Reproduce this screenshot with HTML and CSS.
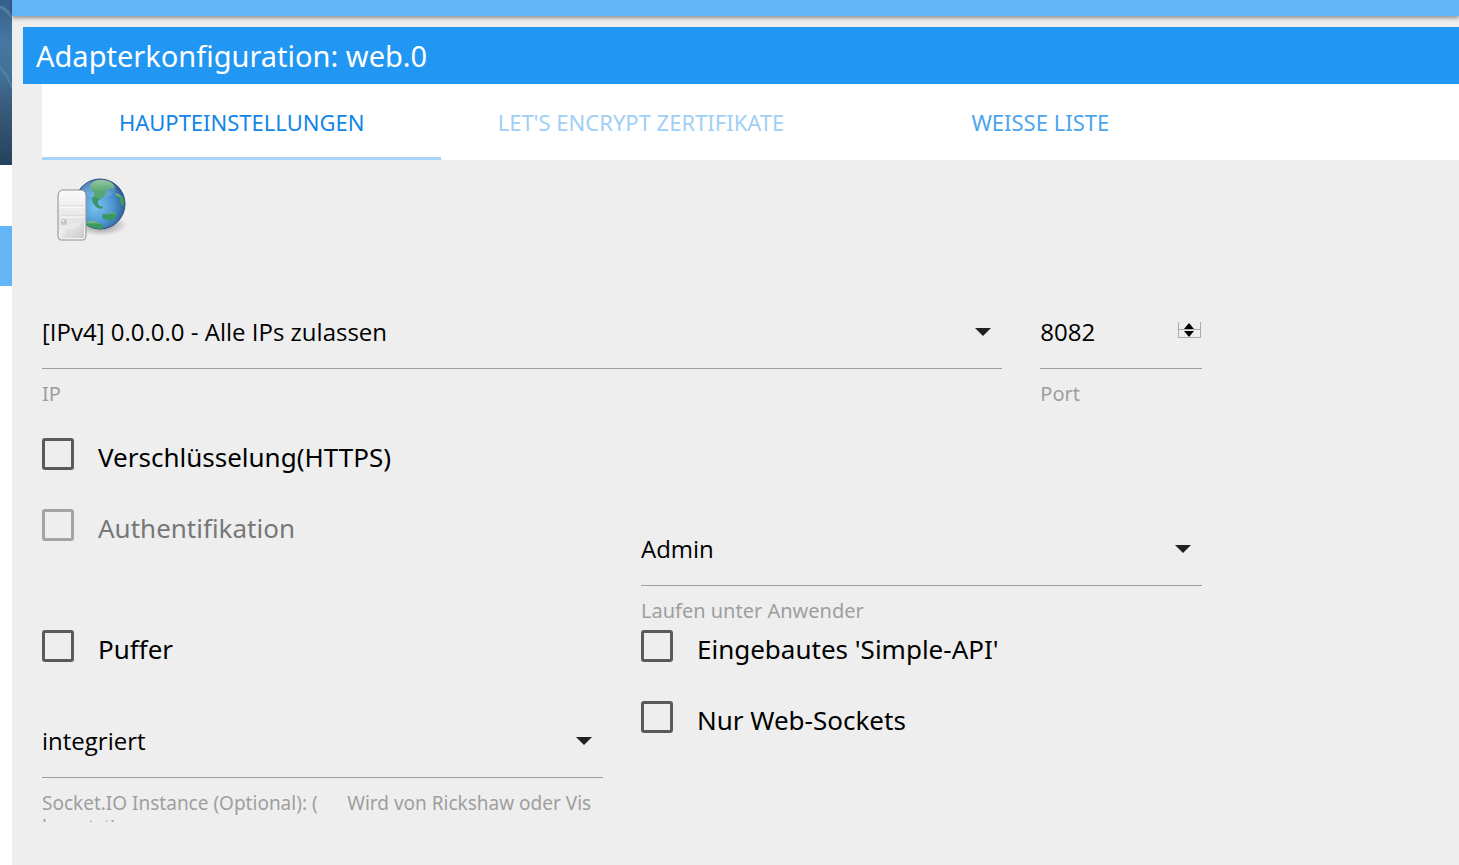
FILE: index.html
```html
<!DOCTYPE html>
<html lang="de">
<head>
<meta charset="UTF-8">
<meta name="viewport" content="width=device-width, initial-scale=1.0">
<title>Adapterkonfiguration: web.0</title>
<link rel="stylesheet" href="styles.css">
</head>
<body>

<aside class="sidebar">
    <div class="sidebar-image">
        <svg viewBox="0 0 12 165" preserveAspectRatio="none" aria-hidden="true">
            <path d="M0 7Q8 10 12 18" stroke="#6590b4" stroke-width="3" fill="none" opacity="0.6"/>
            <path d="M0 67Q7 74 12 88" stroke="#5d8cb0" stroke-width="2" fill="none" opacity="0.6"/>
        </svg>
    </div>
    <div class="sidebar-active"></div>
</aside>

<main class="page">
    <div class="topbar"></div>
    <h1 class="title">Adapterkonfiguration: web.0</h1>

    <div class="content">
        <nav class="tabs">
            <a href="#main" class="tab active">HAUPTEINSTELLUNGEN</a>
            <a href="#letsencrypt" class="tab disabled">LET'S ENCRYPT ZERTIFIKATE</a>
            <a href="#whitelist" class="tab">WEISSE LISTE</a>
        </nav>

        <form class="settings" id="main">
            <svg class="logo" viewBox="0 0 72 72" role="img" aria-label="web">
                <defs>
                    <radialGradient id="globe" cx="42%" cy="55%" r="60%">
                        <stop offset="0" stop-color="#7cc4f0"/>
                        <stop offset="0.6" stop-color="#4b93cf"/>
                        <stop offset="1" stop-color="#2c5a94"/>
                    </radialGradient>
                    <linearGradient id="land" x1="0" y1="0" x2="0" y2="1">
                        <stop offset="0" stop-color="#86bd92"/>
                        <stop offset="0.4" stop-color="#3a9a5f"/>
                        <stop offset="1" stop-color="#3b9667"/>
                    </linearGradient>
                    <linearGradient id="tower" x1="0" y1="0" x2="0" y2="1">
                        <stop offset="0" stop-color="#fafafa"/>
                        <stop offset="0.6" stop-color="#e4e4e4"/>
                        <stop offset="1" stop-color="#f4f4f4"/>
                    </linearGradient>
                    <linearGradient id="foot" x1="0" y1="0" x2="1" y2="1">
                        <stop offset="0" stop-color="#fff"/>
                        <stop offset="1" stop-color="#c9c9c9"/>
                    </linearGradient>
                    <radialGradient id="shadow">
                        <stop offset="0" stop-color="#000" stop-opacity="0.45"/>
                        <stop offset="1" stop-color="#000" stop-opacity="0"/>
                    </radialGradient>
                    <clipPath id="ball"><circle cx="44" cy="28" r="25"/></clipPath>
                </defs>
                <ellipse cx="45" cy="49" rx="26" ry="11" fill="url(#shadow)"/>
                <circle cx="44" cy="28" r="25" fill="url(#globe)" stroke="#2f4f80" stroke-width="1"/>
                <g clip-path="url(#ball)" fill="url(#land)">
                    <path d="M34 10Q36 5 42 4Q52 3 57 8Q60 11 57 13Q54 12 50 14Q51 18 48 21Q44 22 42 25Q41 28 44 30Q47 30 47 32Q44 34 40 31Q36 27 36 22Q39 20 38 16Q34 15 34 10Z"/>
                    <path d="M59 17Q65 18 68 23V30Q63 28 64 24Q63 20 60 20Z"/>
                    <path d="M47 38Q51 37 53 39L55 35L57 37L60 36Q61 41 58 44Q52 45 48 43Q45 41 47 38Z"/>
                    <path d="M30 46Q40 43 48 50L46 54Q35 55 28 48Z"/>
                </g>
                <ellipse cx="43" cy="13" rx="17" ry="9" fill="#fff" opacity="0.14"/>
                <path d="M6 14H26Q30 15 30 19V60Q30 64 27 64H5Q2 64 2 60V19Q3 14 6 14Z" fill="url(#tower)" stroke="#8f8f8f" stroke-width="1"/>
                <path d="M5 30H28M5 40H28" stroke="#cfcfcf"/>
                <path d="M5 31H28M5 41H28" stroke="#fff"/>
                <path d="M28 41Q25 52 14 53Q6 54 4 62H28Z" fill="url(#foot)"/>
                <circle cx="8" cy="46" r="3" fill="#c4c4c4"/>
                <circle cx="7" cy="45" r="1" fill="#f1f1f1"/>
                <path d="M12 53V61" stroke="#d4d4d4"/>
            </svg>

            <div class="row row-network">
                <div class="field field-ip">
                    <div class="control">
                        <select id="bind"><option>[IPv4] 0.0.0.0 - Alle IPs zulassen</option></select>
                        <svg class="caret" viewBox="0 0 16 8" aria-hidden="true"><path d="M0 0H16L8 8Z"/></svg>
                    </div>
                    <label for="bind">IP</label>
                </div>
                <div class="field">
                    <div class="control">
                        <input type="number" id="port" value="8082">
                        <div class="spinner">
                            <button type="button" aria-label="Port erhöhen" onclick="port.stepUp()"><svg viewBox="0 0 10 6"><path d="M0 6H10L5 0Z"/></svg></button>
                            <button type="button" aria-label="Port verringern" onclick="port.stepDown()"><svg viewBox="0 0 10 6"><path d="M0 0H10L5 6Z"/></svg></button>
                        </div>
                    </div>
                    <label for="port">Port</label>
                </div>
            </div>

            <div class="check">
                <input type="checkbox" id="secure">
                <label for="secure">Verschlüsselung(HTTPS)</label>
            </div>

            <div class="row">
                <div class="check">
                    <input type="checkbox" id="auth" disabled>
                    <label for="auth">Authentifikation</label>
                </div>
                <div class="field">
                    <div class="control">
                        <select id="defaultUser"><option>Admin</option></select>
                        <svg class="caret" viewBox="0 0 16 8" aria-hidden="true"><path d="M0 0H16L8 8Z"/></svg>
                    </div>
                    <label for="defaultUser">Laufen unter Anwender</label>
                </div>
            </div>

            <div class="row">
                <div class="column">
                    <div class="check">
                        <input type="checkbox" id="cache">
                        <label for="cache">Puffer</label>
                    </div>
                    <div class="field">
                        <div class="control">
                            <select id="socketio"><option>integriert</option></select>
                            <svg class="caret" viewBox="0 0 16 8" aria-hidden="true"><path d="M0 0H16L8 8Z"/></svg>
                        </div>
                        <label for="socketio" class="long">Socket.IO Instance (Optional): ( &nbsp; &nbsp; &nbsp;Wird von Rickshaw oder Vis benutzt)</label>
                    </div>
                </div>
                <div class="column">
                    <div class="check">
                        <input type="checkbox" id="simpleapi">
                        <label for="simpleapi">Eingebautes 'Simple-API'</label>
                    </div>
                    <div class="check">
                        <input type="checkbox" id="forceWebSockets">
                        <label for="forceWebSockets">Nur Web-Sockets</label>
                    </div>
                </div>
            </div>
        </form>
    </div>
</main>

</body>
</html>
```

FILE: styles.css
```css
* {
    box-sizing: border-box;
}
body {
    display: flex;
    min-height: 100vh;
    margin: 0;
    font-family: "Noto Sans", sans-serif;
    background-color: #fff;
    color: #000;
}

/* Sidebar */
.sidebar {
    flex: 0 0 12px;
}
.sidebar-image {
    height: 165px;
    margin-bottom: 61px;
    background: linear-gradient(#35608c, #4577a0 25%, #42729a 45%, #3d5f80 60%, #26425c);
}
.sidebar-image svg {
    display: block;
    width: 100%;
    height: 100%;
}
.sidebar-active {
    height: 60px;
    background-color: #64b5f6;
}

/* Page */
.page {
    flex: 1;
    min-width: 0;
    background-color: #eee;
}
.topbar {
    height: 16px;
    background-color: #64b5f6;
    box-shadow: 0 2px 4px rgba(0, 0, 0, 0.4);
}
.title {
    margin: 11px 0 0 11px;
    padding: 1px 13px 0;
    background-color: #2196f3;
    color: #fff;
    font-size: 29px;
    font-weight: 400;
    line-height: 56px;
}
.content {
    margin-left: 30px;
}

/* Tabs */
.tabs {
    display: grid;
    grid-template-columns: repeat(3, 1fr);
    padding-right: calc(18% - 36px);
    background-color: #fff;
}
.tab {
    height: 76px;
    border-bottom: 3px solid transparent;
    color: #4ba5ee;
    font-size: 22px;
    line-height: 76px;
    text-align: center;
    text-decoration: none;
    white-space: nowrap;
}
.tab.active {
    border-color: #a6d4fa;
    color: #1185e8;
}
.tab.disabled {
    color: #a0cff6;
}

/* Form */
.settings {
    width: calc(82% - 2px);
}
.logo {
    display: block;
    width: 72px;
    height: 72px;
    margin: 16px 0 24px 14px;
}
.row {
    display: grid;
    grid-template-columns: 1fr 1fr;
    column-gap: 38px;
}
.row-network {
    grid-template-columns: repeat(6, 1fr);
    margin-bottom: 25px;
}
.field-ip {
    grid-column: span 5;
}
.field {
    padding-top: 25px;
}
.control {
    position: relative;
}
select,
input[type="number"] {
    display: block;
    width: 100%;
    height: 72px;
    padding: 0 0 2px;
    border: none;
    border-bottom: 1px solid #9e9e9e;
    border-radius: 0;
    outline: none;
    background-color: transparent;
    color: #000;
    font-family: "Open Sans", sans-serif;
    font-size: 24px;
    appearance: none;
}
input[type="number"]::-webkit-inner-spin-button {
    appearance: none;
}
.field label {
    display: block;
    height: 37px;
    margin-bottom: -13px;
    padding-top: 13px;
    overflow: hidden;
    color: #9e9e9e;
    font-size: 20px;
    line-height: 24px;
}
.field .long {
    height: 44px;
    font-size: 19px;
}
.caret {
    position: absolute;
    top: 31px;
    right: 11px;
    width: 16px;
    height: 8px;
    fill: #212121;
    pointer-events: none;
}
.spinner {
    position: absolute;
    top: 25px;
    right: 1px;
    width: 23px;
}
.spinner button {
    display: flex;
    align-items: center;
    justify-content: center;
    width: 100%;
    height: 8px;
    padding: 0;
    border: 1px solid #aaa;
    border-top: none;
    background-color: #eee;
}
.spinner svg {
    width: 10px;
    height: 6px;
}

/* Checkboxes */
.check {
    display: flex;
    align-items: center;
    gap: 24px;
    height: 71px;
}
.check input {
    flex: none;
    width: 32px;
    height: 32px;
    margin: 0;
    border: 3px solid #5a5a5a;
    border-radius: 3px;
    appearance: none;
}
.check input:checked {
    background-color: #2196f3;
    border-color: #2196f3;
}
.check input:disabled {
    border-color: #a4a4a4;
}
.check label {
    padding-top: 6px;
    font-size: 26px;
    line-height: 32px;
}
.check input:disabled + label {
    color: #777;
}
```
